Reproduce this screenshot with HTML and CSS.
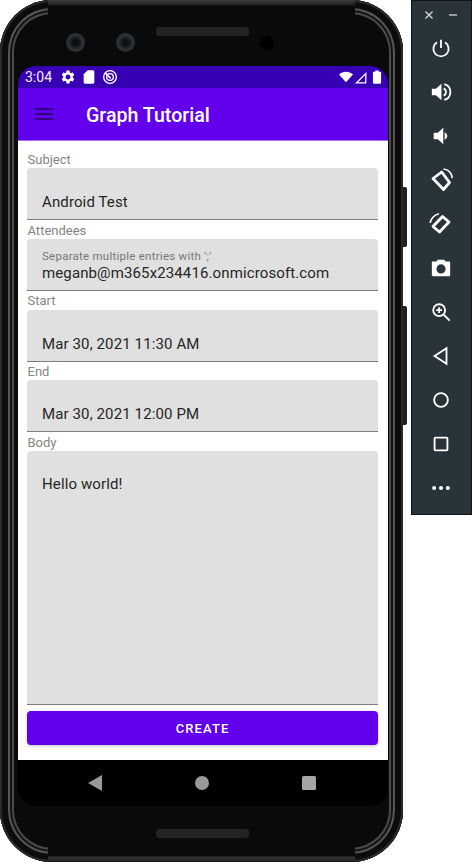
FILE: index.html
```html
<!DOCTYPE html>
<html lang="en">
<head>
    <meta charset="UTF-8">
    <meta name="viewport" content="width=device-width, initial-scale=1.0">
    <title>Graph Tutorial</title>
    <link rel="stylesheet" href="styles.css">
</head>
<body>
    <div class="page">
        <div class="phone">
            <span class="side-key key-power"></span>
            <span class="side-key key-volume"></span>
            <div class="bezel-top">
                <span class="camera"></span>
                <span class="camera camera-second"></span>
                <span class="speaker"></span>
                <span class="sensor"></span>
            </div>
            <div class="screen">
                <div class="status-bar">
                    <span class="clock">3:04</span>
                    <svg class="status-icon" viewBox="0 0 24 24"><path d="M19.14 12.94c.04-.3.06-.61.06-.94 0-.32-.02-.64-.07-.94l2.03-1.58c.18-.14.23-.41.12-.61l-1.92-3.32c-.12-.22-.37-.29-.59-.22l-2.39.96c-.5-.38-1.03-.7-1.62-.94l-.36-2.54c-.04-.24-.24-.41-.48-.41h-3.84c-.24 0-.43.17-.47.41l-.36 2.54c-.59.24-1.13.57-1.62.94l-2.39-.96c-.22-.08-.47 0-.59.22L2.74 8.87c-.12.21-.08.47.12.61l2.03 1.58c-.05.3-.09.63-.09.94s.02.64.07.94l-2.03 1.58c-.18.14-.23.41-.12.61l1.92 3.32c.12.22.37.29.59.22l2.39-.96c.5.38 1.03.7 1.62.94l.36 2.54c.05.24.24.41.48.41h3.84c.24 0 .44-.17.47-.41l.36-2.54c.59-.24 1.13-.56 1.62-.94l2.39.96c.22.08.47 0 .59-.22l1.92-3.32c.12-.22.07-.47-.12-.61l-2.01-1.58zM12 15.6c-1.98 0-3.6-1.62-3.6-3.6s1.62-3.6 3.6-3.6 3.6 1.62 3.6 3.6-1.62 3.6-3.6 3.6z"/></svg>
                    <svg class="status-icon" viewBox="0 0 24 24"><path d="M18 2h-8L4 8v12c0 1.1.9 2 2 2h12c1.1 0 2-.9 2-2V4c0-1.1-.9-2-2-2z"/></svg>
                    <svg class="status-icon" viewBox="0 0 24 24"><circle cx="12" cy="12" r="9.500" fill="none" stroke="#fff" stroke-width="2"/><circle cx="12" cy="12" r="5" fill="none" stroke="#fff" stroke-width="2"/><path d="M5 6 L13 14" stroke="#fff" stroke-width="2.400"/></svg>
                    <span class="status-right">
                        <svg class="status-icon wifi" viewBox="0 0 24 24"><path d="M12 21 L0 7.500 C3.500 4.500 7.500 3 12 3 S20.500 4.500 24 7.500 Z"/></svg>
                        <svg class="status-icon signal" viewBox="0 0 24 24"><path d="M21.500 3 V21.500 H3 Z M19.500 8 L8 19.500 H19.500 Z" fill-rule="evenodd"/></svg>
                        <svg class="status-icon battery" viewBox="0 0 24 24"><path d="M9 1h6v2h2.500c.8 0 1.500.7 1.500 1.500V22c0 .8-.7 1.500-1.500 1.500h-11C5.700 23.500 5 22.800 5 22V4.500C5 3.700 5.700 3 6.500 3H9z"/></svg>
                    </span>
                </div>
                <div class="app-bar">
                    <span class="menu-icon"><i></i><i></i><i></i></span>
                    <h1 class="app-title">Graph Tutorial</h1>
                </div>
                <div class="content">
                    <label class="field-label">Subject</label>
                    <div class="field"><span class="field-value">Android Test</span></div>
                    <label class="field-label">Attendees</label>
                    <div class="field field-hinted">
                        <span class="field-hint">Separate multiple entries with ';'</span>
                        <span class="field-value">meganb@m365x234416.onmicrosoft.com</span>
                    </div>
                    <label class="field-label">Start</label>
                    <div class="field"><span class="field-value">Mar 30, 2021 11:30 AM</span></div>
                    <label class="field-label">End</label>
                    <div class="field"><span class="field-value">Mar 30, 2021 12:00 PM</span></div>
                    <label class="field-label">Body</label>
                    <div class="field field-body"><span class="field-value">Hello world!</span></div>
                    <button class="create-btn">CREATE</button>
                </div>
                <div class="nav-bar">
                    <svg class="nav-icon nav-back" viewBox="0 0 14 16"><path d="M14 0 V16 L0 8 Z"/></svg>
                    <svg class="nav-icon" viewBox="0 0 14 14"><circle cx="7" cy="7" r="7"/></svg>
                    <svg class="nav-icon nav-square" viewBox="0 0 14 14"><rect width="14" height="14" rx="1.500"/></svg>
                </div>
            </div>
            <div class="bezel-bottom"><span class="speaker"></span></div>
        </div>

        <div class="toolbar">
            <div class="toolbar-top">
                <svg class="win-icon" viewBox="0 0 10 10"><path d="M1.500 1.500 L8.500 8.500 M8.500 1.500 L1.500 8.500"/></svg>
                <svg class="win-icon" viewBox="0 0 10 10"><path d="M1 5 H9"/></svg>
            </div>
            <button class="tool-btn"><svg viewBox="0 0 24 24"><path class="line" d="M12 3 V12 M7.600 5.800 A8.300 8.300 0 1 0 16.400 5.800"/></svg></button>
            <button class="tool-btn"><svg viewBox="0 0 24 24"><path d="M2 8.500 V15.500 H6.500 L12.500 21 V3 L6.500 8.500 Z"/><path class="line" d="M15 8 A4.500 4.500 0 0 1 15 16 M15.500 3.300 A9 9 0 0 1 15.500 20.700"/></svg></button>
            <button class="tool-btn"><svg viewBox="0 0 24 24"><path d="M4 8.500 V15.500 H8.500 L14.500 21 V3 L8.500 8.500 Z"/><path d="M16 7.800 A4.500 4.500 0 0 1 16 16.200 Z"/></svg></button>
            <button class="tool-btn"><svg class="rotate-icon" viewBox="0 0 24 24"><path class="line thick" d="M4 10.500 L12.700 4 L20.500 14.500 L14.500 21.500 Z"/><path class="line thin" d="M14.500 1 C19 1.500 22.500 5 23.300 10"/></svg></button>
            <button class="tool-btn"><svg class="rotate-icon" viewBox="0 0 24 24"><path class="line thick" d="M4 14.500 L13.500 4.500 L20 10 L10.500 20 Z"/><path class="line thin" d="M1.200 11 C1.800 6.500 5.500 2.500 10 1.800"/></svg></button>
            <button class="tool-btn"><svg viewBox="0 0 24 24"><path fill-rule="evenodd" d="M8.500 3 H15.500 L17 5 H21 C21.800 5 22 5.500 22 6 V20 C22 20.800 21.500 21 21 21 H3 C2.300 21 2 20.500 2 20 V6 C2 5.500 2.300 5 3 5 H7 Z M12 8 A5 5 0 1 0 12 18 A5 5 0 1 0 12 8 Z"/></svg></button>
            <button class="tool-btn"><svg viewBox="0 0 24 24"><circle class="line" cx="10" cy="10" r="6.500"/><path class="line" d="M15 15 L21.500 21.500 M10 6.800 V13.200 M6.800 10 H13.200"/></svg></button>
            <button class="tool-btn"><svg viewBox="0 0 24 24"><path class="line" d="M18 3.500 V20.500 L5 12 Z"/></svg></button>
            <button class="tool-btn"><svg viewBox="0 0 24 24"><circle class="line" cx="12" cy="12" r="7.500"/></svg></button>
            <button class="tool-btn"><svg viewBox="0 0 24 24"><rect class="line" x="5" y="5" width="14" height="14" rx="1"/></svg></button>
            <button class="tool-btn"><svg viewBox="0 0 24 24"><circle cx="4.500" cy="12" r="2.200"/><circle cx="12" cy="12" r="2.200"/><circle cx="19.500" cy="12" r="2.200"/></svg></button>
        </div>
    </div>
</body>
</html>
```

FILE: styles.css
```css
* {
    box-sizing: border-box;
}
body {
    margin: 0;
    background-color: #fff;
    font-family: Roboto, "Liberation Sans", sans-serif;
}
.page {
    display: flex;
    align-items: flex-start;
    gap: 8px;
    width: 472px;
    height: 864px;
    overflow: hidden;
}

/* phone body */
.phone {
    position: relative;
    flex: none;
    display: flex;
    flex-direction: column;
    width: 403px;
    height: 862px;
    padding: 0 15px 0 18px;
    border-radius: 52px;
    background-color: #0a0a0a;
    box-shadow:
        inset 0 0 0 2px #2a2a2a,
        inset 0 0 0 8px #0c0c0c,
        inset 0 0 0 10px #565656,
        inset 0 0 0 12px #141414,
        inset 0 0 0 14px #4a4a4a,
        inset 0 0 0 15px #0a0a0a;
}
/* the bright rims only run down the sides, top and bottom edges are dull */
.phone::before,
.phone::after {
    content: "";
    position: absolute;
    left: 48px;
    right: 48px;
    height: 18px;
}
.phone::before {
    top: 0;
    background: linear-gradient(#3c3c3c, #262626 4px, #0a0a0a 6px);
}
.phone::after {
    bottom: 0;
    background: linear-gradient(#0a0a0a 12px, #333 13px, #2a2a2a 16px, #111);
}
.side-key {
    position: absolute;
    left: 403px;
    width: 4px;
    background-color: #1f1f1f;
    border-radius: 0 2px 2px 0;
}
.key-power {
    top: 187px;
    height: 60px;
}
.key-volume {
    top: 306px;
    height: 119px;
}
.bezel-top {
    flex: none;
    display: flex;
    height: 66px;
    padding: 33px 0 0 48px;
}
.camera {
    flex: none;
    width: 19px;
    height: 19px;
    border-radius: 50%;
    background: radial-gradient(circle, #0c0f10 20%, #2c3236 55%, #1a1f22 100%);
}
.camera-second {
    margin-left: 31px;
}
.speaker {
    display: block;
    flex: none;
    width: 93px;
    height: 9px;
    border-radius: 3px;
    background-color: #232323;
}
.bezel-top .speaker {
    margin: -6px 0 0 21px;
}
.sensor {
    flex: none;
    width: 14px;
    height: 14px;
    margin: 3px 0 0 11px;
    border-radius: 50%;
    background-color: #000;
}
.bezel-bottom {
    flex: none;
    height: 56px;
    padding: 23px 0 0 138px;
}

/* screen */
.screen {
    flex: none;
    display: flex;
    flex-direction: column;
    width: 370px;
    height: 740px;
    border-radius: 18px;
    overflow: hidden;
    background-color: #000;
}
.status-bar {
    flex: none;
    display: flex;
    align-items: center;
    height: 22px;
    padding: 0 4px 0 7px;
    background-color: #3700b3;
    color: #f2effa;
    font-size: 14px;
}
.clock {
    width: 35px;
}
.status-icon {
    flex: none;
    width: 16px;
    height: 16px;
    margin-right: 5px;
    fill: #fff;
}
.status-right {
    display: flex;
    align-items: center;
    margin-left: auto;
}
.status-right .status-icon {
    margin-right: 0;
}
.status-right .wifi,
.status-right .battery {
    width: 14px;
    height: 14px;
}
.status-right .signal {
    width: 15px;
    height: 15px;
}
.status-right .battery {
    margin-left: 2px;
}
.app-bar {
    flex: none;
    display: flex;
    align-items: center;
    height: 53px;
    padding-left: 17px;
    background-color: #6200ee;
    border-bottom: 1px solid #a56ff0;
}
.menu-icon {
    display: flex;
    flex-direction: column;
    gap: 3px;
    width: 18px;
}
.menu-icon i {
    height: 2px;
    background-color: #2f0080;
}
.app-title {
    margin: 4px 0 0 33px;
    color: #fff;
    font-size: 19.6px;
    font-weight: 500;
    line-height: 24px;
}
.content {
    flex: 1;
    display: flex;
    flex-direction: column;
    padding: 8.25px 10px 15px 9px;
    background-color: #fff;
}
.field-label {
    flex: none;
    height: 18.75px;
    padding: 1.5px 0 0 0.5px;
    color: #858585;
    font-size: 13px;
    line-height: 18px;
}
.field {
    flex: none;
    display: flex;
    flex-direction: column;
    height: 52px;
    padding: 24px 15px 0;
    border-radius: 4px 4px 0 0;
    border-bottom: 1px solid #7d7d7d;
    background-color: #e0e0e0;
}
.field-hinted {
    padding-top: 10px;
}
.field-body {
    flex: 1;
    height: auto;
    padding-top: 23px;
}
.field-hint {
    color: #777;
    font-size: 11.5px;
    line-height: 14px;
    letter-spacing: 0.25px;
}
.field-value {
    color: #262626;
    font-size: 15px;
    line-height: 20px;
    letter-spacing: 0.12px;
}
.create-btn {
    flex: none;
    height: 34px;
    margin-top: 6px;
    padding: 0;
    border: none;
    border-radius: 4px;
    background-color: #6200ee;
    color: #fff;
    font-family: inherit;
    font-size: 13px;
    font-weight: 500;
    letter-spacing: 1.1px;
    box-shadow: 0 1px 3px rgba(0, 0, 0, 0.25);
}
.nav-bar {
    flex: none;
    display: flex;
    justify-content: space-between;
    align-items: center;
    height: 46px;
    padding: 0 72px 0 70px;
    background-color: #000;
}
.nav-icon {
    width: 14px;
    height: 14px;
    fill: #999;
}
.nav-back {
    height: 16px;
}
.nav-square {
    fill: #a6a6a6;
}

/* emulator toolbar */
.toolbar {
    flex: none;
    display: flex;
    flex-direction: column;
    width: 61px;
    height: 515px;
    padding-right: 1px;
    border: 1px solid #101517;
    background-color: #28333a;
}
.toolbar-top {
    display: flex;
    justify-content: space-between;
    height: 25px;
    padding: 9px 12px 0 12px;
}
.win-icon {
    width: 10px;
    height: 10px;
    fill: none;
    stroke: #d5d9db;
    stroke-width: 1.3;
}
.tool-btn {
    flex: none;
    display: flex;
    justify-content: center;
    align-items: center;
    height: 44px;
    padding: 0;
    border: none;
    background: none;
}
.tool-btn svg {
    width: 22px;
    height: 22px;
    fill: #fff;
}
.tool-btn .rotate-icon {
    width: 24px;
    height: 24px;
}
.tool-btn .line {
    fill: none;
    stroke: #fff;
    stroke-width: 2;
}
.tool-btn .thick {
    stroke-width: 2.8;
    stroke-linejoin: round;
}
.tool-btn .thin {
    stroke-width: 1.6;
}
```
